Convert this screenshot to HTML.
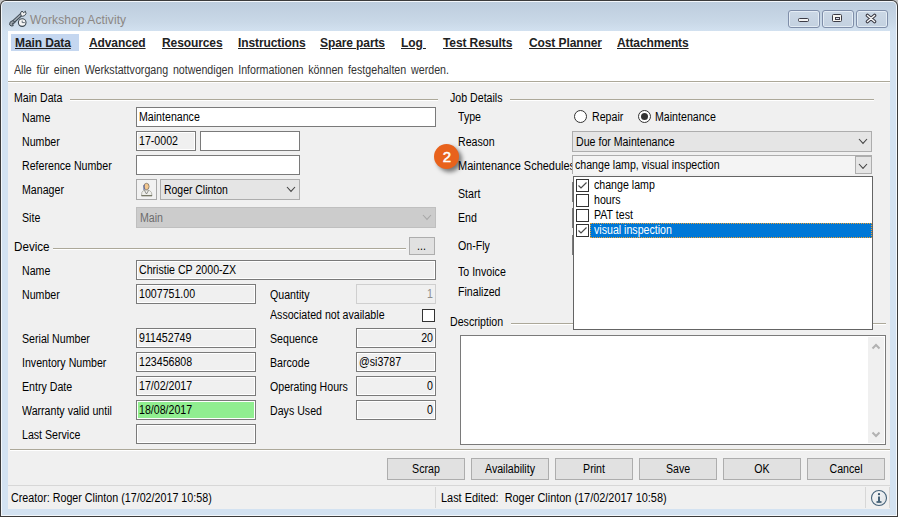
<!DOCTYPE html>
<html><head><meta charset="utf-8"><style>
html,body{margin:0;padding:0;width:898px;height:517px;overflow:hidden;background:#c4c4c4;}
body>div,body>svg{position:absolute;}
div{position:absolute;box-sizing:content-box;}
.t{font-family:"Liberation Sans",sans-serif;white-space:nowrap;}
</style></head><body>
<div style="left:0;top:0;width:898px;height:517px;background:#3b3b3b;border-radius:6px 6px 0 0"></div>
<div style="left:1px;top:1px;width:896px;height:515px;background:#f3f7fb;border-radius:5px 5px 0 0"></div>
<div style="left:2px;top:2px;width:894px;height:513px;background:linear-gradient(#bdcddd 0px,#c9d8e7 20px,#d2e1f0 29px,#d3e2f1 40px);border-radius:4px 4px 0 0"></div>
<div style="left:8px;top:31px;width:882px;height:478px;background:#f0f0f0"></div>
<div style="left:8px;top:31px;width:882px;height:50px;background:#fff"></div>
<div style="left:8px;top:81px;width:882px;height:1px;background:#aca899"></div>
<div style="left:8px;top:82px;width:882px;height:1px;background:#fff"></div>
<div class="t" style="left:30px;top:13px;font-size:12px;line-height:14px;letter-spacing:0.1px;color:#8c8784;">Workshop Activity</div>
<div style="left:788px;top:10px;width:30px;height:16px;border:1px solid #7f8ea9;border-radius:3px;background:linear-gradient(#cbd8e6,#c3d1e0);box-shadow:inset 0 0 0 1px rgba(240,246,252,0.7)"></div>
<div style="left:822px;top:10px;width:30px;height:16px;border:1px solid #7f8ea9;border-radius:3px;background:linear-gradient(#cbd8e6,#c3d1e0);box-shadow:inset 0 0 0 1px rgba(240,246,252,0.7)"></div>
<div style="left:856px;top:10px;width:30px;height:16px;border:1px solid #7f8ea9;border-radius:3px;background:linear-gradient(#cbd8e6,#c3d1e0);box-shadow:inset 0 0 0 1px rgba(240,246,252,0.7)"></div>
<div style="left:798px;top:18px;width:9px;height:2px;border:1.2px solid #3c3c46;background:#f4f4f4;border-radius:1.5px"></div>
<div style="left:832px;top:14px;width:8px;height:6px;border:1.3px solid #3c3c46;background:#f7f5f0;border-radius:1.5px"></div>
<div style="left:835px;top:17px;width:3px;height:1px;border:1px solid #3c3c46;background:#dde"></div>
<svg style="position:absolute;left:864px;top:12px" width="14" height="12"><path d="M3.5,3.5 L10.5,9.5 M10.5,3.5 L3.5,9.5" stroke="#3c3c46" stroke-width="3.6" stroke-linecap="round"/><path d="M3.5,3.5 L10.5,9.5 M10.5,3.5 L3.5,9.5" stroke="#fafafa" stroke-width="1.5" stroke-linecap="round"/></svg>
<svg style="position:absolute;left:6px;top:8px" width="24" height="22" viewBox="6 8 24 22">
<path d="M11.8,23.2 L22.4,13.4" stroke="#3e4a54" stroke-width="3.4" stroke-linecap="round"/>
<path d="M12.2,22.8 L22,13.8" stroke="#aab2ba" stroke-width="1.3"/>
<path d="M21,15.8 Q19.6,12.6 22,11 L23.6,12.8 L25.4,11.2 Q27,13.8 24.6,15.6 Q22.6,16.8 21,15.8 Z" fill="#f4f4f4" stroke="#3e4a54" stroke-width="1"/>
<path d="M9.6,24.8 Q9.2,21.6 12.2,20.8 Q14.6,20.6 15,22.6 L12.6,23.4 L13.2,25.8 Q10.8,26.6 9.6,24.8 Z" fill="#9aa2aa" stroke="#3e4a54" stroke-width="1"/>
<circle cx="22.2" cy="22.6" r="3.8" fill="#f4f4f4" stroke="#3e4a54" stroke-width="1.1"/>
<path d="M22.2,20.6 L22.2,22.6 L24.8,22.6" stroke="#56616a" stroke-width="0.9" fill="none"/>
</svg>
<div style="left:11px;top:34px;width:68px;height:17px;background:#c5d7f0"></div>
<div class="t" style="left:15px;top:36px;font-size:12px;line-height:14px;letter-spacing:-0.1px;color:#222;font-weight:bold;text-decoration:underline;">Main Data</div>
<div class="t" style="left:89px;top:36px;font-size:12px;line-height:14px;letter-spacing:-0.1px;color:#222;font-weight:bold;text-decoration:underline;">Advanced</div>
<div class="t" style="left:162px;top:36px;font-size:12px;line-height:14px;letter-spacing:-0.1px;color:#222;font-weight:bold;text-decoration:underline;">Resources</div>
<div class="t" style="left:238px;top:36px;font-size:12px;line-height:14px;letter-spacing:-0.1px;color:#222;font-weight:bold;text-decoration:underline;">Instructions</div>
<div class="t" style="left:320px;top:36px;font-size:12px;line-height:14px;letter-spacing:-0.1px;color:#222;font-weight:bold;text-decoration:underline;">Spare parts</div>
<div class="t" style="left:401px;top:36px;font-size:12px;line-height:14px;letter-spacing:-0.1px;color:#222;font-weight:bold;text-decoration:underline;">Log&nbsp;</div>
<div class="t" style="left:443px;top:36px;font-size:12px;line-height:14px;letter-spacing:-0.1px;color:#222;font-weight:bold;text-decoration:underline;">Test Results</div>
<div class="t" style="left:529px;top:36px;font-size:12px;line-height:14px;letter-spacing:-0.1px;color:#222;font-weight:bold;text-decoration:underline;">Cost Planner</div>
<div class="t" style="left:617px;top:36px;font-size:12px;line-height:14px;letter-spacing:-0.1px;color:#222;font-weight:bold;text-decoration:underline;">Attachments</div>
<div class="t" style="left:14px;top:63px;font-size:12px;line-height:14px;transform:scaleX(0.89);transform-origin:0 0;color:#333;word-spacing:2px;">Alle f&uuml;r einen Werkstattvorgang notwendigen Informationen k&ouml;nnen festgehalten werden.</div>
<div class="t" style="left:14px;top:91px;font-size:12px;line-height:14px;transform:scaleX(0.885);transform-origin:0 0;color:#000;">Main Data</div>
<div style="left:70px;top:99px;width:368px;height:1px;background:#aca899"></div>
<div style="left:70px;top:100px;width:368px;height:1px;background:#fff"></div>
<div class="t" style="left:22px;top:111px;font-size:12px;line-height:14px;transform:scaleX(0.885);transform-origin:0 0;color:#000;">Name</div>
<div class="t" style="left:22px;top:135px;font-size:12px;line-height:14px;transform:scaleX(0.885);transform-origin:0 0;color:#000;">Number</div>
<div class="t" style="left:22px;top:159px;font-size:12px;line-height:14px;transform:scaleX(0.885);transform-origin:0 0;color:#000;">Reference Number</div>
<div class="t" style="left:22px;top:183px;font-size:12px;line-height:14px;transform:scaleX(0.885);transform-origin:0 0;color:#000;">Manager</div>
<div class="t" style="left:22px;top:211px;font-size:12px;line-height:14px;transform:scaleX(0.885);transform-origin:0 0;color:#000;">Site</div>
<div style="left:136px;top:107px;width:300px;height:20px;background:#7a7a7a"></div>
<div style="left:137px;top:108px;width:298px;height:18px;background:#fff"></div>
<div class="t" style="left:139px;top:110px;font-size:12px;line-height:14px;transform:scaleX(0.885);transform-origin:0 0;color:#000;">Maintenance</div>
<div style="left:136px;top:131px;width:60px;height:20px;background:#7a7a7a"></div>
<div style="left:137px;top:132px;width:58px;height:18px;background:#fff"></div>
<div style="left:138px;top:133px;width:56px;height:16px;background:#f0f0f0"></div>
<div class="t" style="left:139px;top:134px;font-size:12px;line-height:14px;transform:scaleX(0.885);transform-origin:0 0;color:#000;">17-0002</div>
<div style="left:200px;top:131px;width:100px;height:20px;background:#7a7a7a"></div>
<div style="left:201px;top:132px;width:98px;height:18px;background:#fff"></div>
<div style="left:136px;top:155px;width:164px;height:20px;background:#7a7a7a"></div>
<div style="left:137px;top:156px;width:162px;height:18px;background:#fff"></div>
<div style="left:136px;top:179px;width:21px;height:21px;background:#a9a9a9"></div>
<div style="left:137px;top:180px;width:19px;height:19px;background:#f2f2f2"></div>
<svg style="position:absolute;left:137px;top:180px" width="20" height="19" viewBox="137 180 20 19">
<path d="M141.5,196 L141.8,192.5 Q142.5,190 146.5,190 Q150.5,190 151.5,192.5 L152,196 Z" fill="#efefeb" stroke="#a8a8a0" stroke-width="0.8"/>
<path d="M144.5,190.5 L146.5,194 L148.5,190.5" fill="none" stroke="#7a7a74" stroke-width="0.8"/>
<path d="M141.5,195.6 L152,195.6" stroke="#6f705c" stroke-width="1"/>
<ellipse cx="146.5" cy="186.5" rx="2.6" ry="3.2" fill="#f4c890" stroke="#6a6660" stroke-width="0.7"/>
<path d="M144,185 L144,190" stroke="#4a5a9a" stroke-width="1"/>
</svg>
<div style="left:160px;top:179px;width:140px;height:21px;background:#adadad"></div>
<div style="left:161px;top:180px;width:138px;height:19px;background:#e5e5e5"></div>
<svg style="position:absolute;left:285.8px;top:186.3px" width="10" height="6.4"><polyline points="1,1 5.0,5.4 9,1" fill="none" stroke="#444" stroke-width="1.1"/></svg>
<div class="t" style="left:164px;top:183px;font-size:12px;line-height:14px;transform:scaleX(0.87);transform-origin:0 0;color:#000;">Roger Clinton</div>
<div style="left:136px;top:207px;width:300px;height:21px;background:#bfbfbf"></div>
<div style="left:137px;top:208px;width:298px;height:19px;background:#cccccc"></div>
<svg style="position:absolute;left:421.8px;top:214.3px" width="10" height="6.4"><polyline points="1,1 5.0,5.4 9,1" fill="none" stroke="#a8a8a8" stroke-width="1.1"/></svg>
<div class="t" style="left:140px;top:211px;font-size:12px;line-height:14px;transform:scaleX(0.885);transform-origin:0 0;color:#6d6d6d;">Main</div>
<div class="t" style="left:14px;top:240px;font-size:12px;line-height:14px;transform:scaleX(0.97);transform-origin:0 0;color:#000;">Device</div>
<div style="left:53px;top:248px;width:353px;height:1px;background:#aca899"></div>
<div style="left:53px;top:249px;width:353px;height:1px;background:#fff"></div>
<div style="left:409px;top:237px;width:26px;height:18px;background:#adadad"></div>
<div style="left:410px;top:238px;width:24px;height:16px;background:#e1e1e1"></div>
<div class="t" style="left:417px;top:239px;font-size:12px;line-height:14px;transform:scaleX(0.885);transform-origin:0 0;color:#000;">...</div>
<div class="t" style="left:22px;top:264px;font-size:12px;line-height:14px;transform:scaleX(0.885);transform-origin:0 0;color:#000;">Name</div>
<div class="t" style="left:22px;top:288px;font-size:12px;line-height:14px;transform:scaleX(0.885);transform-origin:0 0;color:#000;">Number</div>
<div class="t" style="left:22px;top:332px;font-size:12px;line-height:14px;transform:scaleX(0.885);transform-origin:0 0;color:#000;">Serial Number</div>
<div class="t" style="left:22px;top:356px;font-size:12px;line-height:14px;transform:scaleX(0.885);transform-origin:0 0;color:#000;">Inventory Number</div>
<div class="t" style="left:22px;top:380px;font-size:12px;line-height:14px;transform:scaleX(0.885);transform-origin:0 0;color:#000;">Entry Date</div>
<div class="t" style="left:22px;top:404px;font-size:12px;line-height:14px;transform:scaleX(0.885);transform-origin:0 0;color:#000;">Warranty valid until</div>
<div class="t" style="left:22px;top:428px;font-size:12px;line-height:14px;transform:scaleX(0.885);transform-origin:0 0;color:#000;">Last Service</div>
<div style="left:136px;top:260px;width:300px;height:20px;background:#7a7a7a"></div>
<div style="left:137px;top:261px;width:298px;height:18px;background:#fff"></div>
<div style="left:138px;top:262px;width:296px;height:16px;background:#f0f0f0"></div>
<div class="t" style="left:139px;top:263px;font-size:12px;line-height:14px;transform:scaleX(0.885);transform-origin:0 0;color:#000;">Christie CP 2000-ZX</div>
<div style="left:136px;top:284px;width:120px;height:20px;background:#7a7a7a"></div>
<div style="left:137px;top:285px;width:118px;height:18px;background:#fff"></div>
<div style="left:138px;top:286px;width:116px;height:16px;background:#f0f0f0"></div>
<div class="t" style="left:139px;top:287px;font-size:12px;line-height:14px;transform:scaleX(0.885);transform-origin:0 0;color:#000;">1007751.00</div>
<div style="left:136px;top:328px;width:120px;height:20px;background:#7a7a7a"></div>
<div style="left:137px;top:329px;width:118px;height:18px;background:#fff"></div>
<div style="left:138px;top:330px;width:116px;height:16px;background:#f0f0f0"></div>
<div class="t" style="left:139px;top:331px;font-size:12px;line-height:14px;transform:scaleX(0.885);transform-origin:0 0;color:#000;">911452749</div>
<div style="left:136px;top:352px;width:120px;height:20px;background:#7a7a7a"></div>
<div style="left:137px;top:353px;width:118px;height:18px;background:#fff"></div>
<div style="left:138px;top:354px;width:116px;height:16px;background:#f0f0f0"></div>
<div class="t" style="left:139px;top:355px;font-size:12px;line-height:14px;transform:scaleX(0.885);transform-origin:0 0;color:#000;">123456808</div>
<div style="left:136px;top:376px;width:120px;height:20px;background:#7a7a7a"></div>
<div style="left:137px;top:377px;width:118px;height:18px;background:#fff"></div>
<div style="left:138px;top:378px;width:116px;height:16px;background:#f0f0f0"></div>
<div class="t" style="left:139px;top:379px;font-size:12px;line-height:14px;transform:scaleX(0.885);transform-origin:0 0;color:#000;">17/02/2017</div>
<div style="left:136px;top:400px;width:120px;height:20px;background:#7a7a7a"></div>
<div style="left:137px;top:401px;width:118px;height:18px;background:#fff"></div>
<div style="left:138px;top:402px;width:116px;height:16px;background:#90ee90"></div>
<div class="t" style="left:139px;top:403px;font-size:12px;line-height:14px;transform:scaleX(0.885);transform-origin:0 0;color:#000;">18/08/2017</div>
<div style="left:136px;top:424px;width:120px;height:20px;background:#7a7a7a"></div>
<div style="left:137px;top:425px;width:118px;height:18px;background:#fff"></div>
<div style="left:138px;top:426px;width:116px;height:16px;background:#f0f0f0"></div>
<div class="t" style="left:270px;top:288px;font-size:12px;line-height:14px;transform:scaleX(0.885);transform-origin:0 0;color:#000;">Quantity</div>
<div class="t" style="left:270px;top:308px;font-size:12px;line-height:14px;transform:scaleX(0.885);transform-origin:0 0;color:#000;">Associated not available</div>
<div class="t" style="left:270px;top:332px;font-size:12px;line-height:14px;transform:scaleX(0.885);transform-origin:0 0;color:#000;">Sequence</div>
<div class="t" style="left:270px;top:356px;font-size:12px;line-height:14px;transform:scaleX(0.885);transform-origin:0 0;color:#000;">Barcode</div>
<div class="t" style="left:270px;top:380px;font-size:12px;line-height:14px;transform:scaleX(0.885);transform-origin:0 0;color:#000;">Operating Hours</div>
<div class="t" style="left:270px;top:404px;font-size:12px;line-height:14px;transform:scaleX(0.885);transform-origin:0 0;color:#000;">Days Used</div>
<div style="left:356px;top:284px;width:80px;height:20px;background:#cfcfcf"></div>
<div style="left:357px;top:285px;width:78px;height:18px;background:#f0f0f0"></div>
<div class="t" style="left:233px;width:200px;text-align:right;top:287px;font-size:12px;line-height:14px;transform:scaleX(0.885);transform-origin:100% 0;color:#8d8d8d">1</div>
<div style="left:422px;top:309px;width:13px;height:13px;background:#333"></div>
<div style="left:423px;top:310px;width:11px;height:11px;background:#fff"></div>
<div style="left:356px;top:328px;width:80px;height:20px;background:#7a7a7a"></div>
<div style="left:357px;top:329px;width:78px;height:18px;background:#fff"></div>
<div style="left:358px;top:330px;width:76px;height:16px;background:#f0f0f0"></div>
<div class="t" style="left:233px;width:200px;text-align:right;top:331px;font-size:12px;line-height:14px;transform:scaleX(0.885);transform-origin:100% 0;color:#000">20</div>
<div style="left:356px;top:352px;width:80px;height:20px;background:#7a7a7a"></div>
<div style="left:357px;top:353px;width:78px;height:18px;background:#fff"></div>
<div style="left:358px;top:354px;width:76px;height:16px;background:#f0f0f0"></div>
<div style="left:356px;top:376px;width:80px;height:20px;background:#7a7a7a"></div>
<div style="left:357px;top:377px;width:78px;height:18px;background:#fff"></div>
<div style="left:358px;top:378px;width:76px;height:16px;background:#f0f0f0"></div>
<div class="t" style="left:233px;width:200px;text-align:right;top:379px;font-size:12px;line-height:14px;transform:scaleX(0.885);transform-origin:100% 0;color:#000">0</div>
<div style="left:356px;top:400px;width:80px;height:20px;background:#7a7a7a"></div>
<div style="left:357px;top:401px;width:78px;height:18px;background:#fff"></div>
<div style="left:358px;top:402px;width:76px;height:16px;background:#f0f0f0"></div>
<div class="t" style="left:233px;width:200px;text-align:right;top:403px;font-size:12px;line-height:14px;transform:scaleX(0.885);transform-origin:100% 0;color:#000">0</div>
<div class="t" style="left:359px;top:355px;font-size:12px;line-height:14px;transform:scaleX(0.885);transform-origin:0 0;color:#000;">@si3787</div>
<div class="t" style="left:450px;top:315px;font-size:12px;line-height:14px;transform:scaleX(0.885);transform-origin:0 0;color:#000;">Description</div>
<div style="left:511px;top:323px;width:375px;height:1px;background:#aca899"></div>
<div style="left:511px;top:324px;width:375px;height:1px;background:#fff"></div>
<div style="left:460px;top:335px;width:426px;height:110px;background:#7a7a7a"></div>
<div style="left:461px;top:336px;width:424px;height:108px;background:#fff"></div>
<div style="left:868px;top:337px;width:16px;height:106px;background:#f0f0f0"></div>
<svg style="position:absolute;left:870px;top:341px" width="12" height="10"><polyline points="2.5,7.5 6,4 9.5,7.5" fill="none" stroke="#b2b2b2" stroke-width="2"/></svg>
<svg style="position:absolute;left:870px;top:430px" width="12" height="10"><polyline points="2.5,2.5 6,6 9.5,2.5" fill="none" stroke="#b2b2b2" stroke-width="2"/></svg>
<div class="t" style="left:450px;top:91px;font-size:12px;line-height:14px;transform:scaleX(0.885);transform-origin:0 0;color:#000;">Job Details</div>
<div style="left:510px;top:99px;width:364px;height:1px;background:#aca899"></div>
<div style="left:510px;top:100px;width:364px;height:1px;background:#fff"></div>
<div class="t" style="left:458px;top:110px;font-size:12px;line-height:14px;transform:scaleX(0.885);transform-origin:0 0;color:#000;">Type</div>
<div class="t" style="left:458px;top:135px;font-size:12px;line-height:14px;transform:scaleX(0.885);transform-origin:0 0;color:#000;">Reason</div>
<div class="t" style="left:458px;top:159px;font-size:12px;line-height:14px;transform:scaleX(0.914);transform-origin:0 0;color:#000;">Maintenance Schedules</div>
<div class="t" style="left:458px;top:187px;font-size:12px;line-height:14px;transform:scaleX(0.885);transform-origin:0 0;color:#000;">Start</div>
<div class="t" style="left:458px;top:211px;font-size:12px;line-height:14px;transform:scaleX(0.885);transform-origin:0 0;color:#000;">End</div>
<div class="t" style="left:458px;top:239px;font-size:12px;line-height:14px;transform:scaleX(0.885);transform-origin:0 0;color:#000;">On-Fly</div>
<div class="t" style="left:458px;top:265px;font-size:12px;line-height:14px;transform:scaleX(0.885);transform-origin:0 0;color:#000;">To Invoice</div>
<div class="t" style="left:458px;top:285px;font-size:12px;line-height:14px;transform:scaleX(0.885);transform-origin:0 0;color:#000;">Finalized</div>
<svg style="position:absolute;left:573px;top:109px" width="15" height="15"><circle cx="7.5" cy="7.5" r="6" fill="#fff" stroke="#333" stroke-width="1"/></svg>
<div class="t" style="left:592px;top:110px;font-size:12px;line-height:14px;transform:scaleX(0.885);transform-origin:0 0;color:#000;">Repair</div>
<svg style="position:absolute;left:637px;top:109px" width="15" height="15"><circle cx="7.5" cy="7.5" r="6" fill="#fff" stroke="#333" stroke-width="1"/><circle cx="7.5" cy="7.5" r="3.5" fill="#333"/></svg>
<div class="t" style="left:655px;top:110px;font-size:12px;line-height:14px;transform:scaleX(0.885);transform-origin:0 0;color:#000;">Maintenance</div>
<div style="left:572px;top:131px;width:300px;height:21px;background:#adadad"></div>
<div style="left:573px;top:132px;width:298px;height:19px;background:#e5e5e5"></div>
<svg style="position:absolute;left:857.8px;top:138.3px" width="10" height="6.4"><polyline points="1,1 5.0,5.4 9,1" fill="none" stroke="#444" stroke-width="1.1"/></svg>
<div class="t" style="left:576px;top:135px;font-size:12px;line-height:14px;transform:scaleX(0.885);transform-origin:0 0;color:#000;">Due for Maintenance</div>
<div style="left:572px;top:155px;width:300px;height:19px;background:#adadad"></div>
<div style="left:573px;top:156px;width:298px;height:18px;background:#f4f4f4"></div>
<div style="left:855px;top:156px;width:17px;height:18px;background:#adadad"></div>
<div style="left:856px;top:157px;width:15px;height:16px;background:#e5e5e5"></div>
<svg style="position:absolute;left:858.2px;top:162.60000000000002px" width="10" height="6.4"><polyline points="1,1 5.0,5.4 9,1" fill="none" stroke="#444" stroke-width="1.1"/></svg>
<div class="t" style="left:575px;top:158px;font-size:12px;line-height:14px;transform:scaleX(0.885);transform-origin:0 0;color:#000;">change lamp, visual inspection</div>
<div style="left:572px;top:182px;width:1px;height:20px;background:#7a7a7a"></div>
<div style="left:572px;top:208px;width:1px;height:20px;background:#7a7a7a"></div>
<div style="left:572px;top:235px;width:1px;height:20px;background:#7a7a7a"></div>
<div style="left:573px;top:176px;width:300px;height:154px;background:#646464"></div>
<div style="left:574px;top:177px;width:298px;height:152px;background:#fff"></div>
<div class="t" style="left:594px;top:178px;font-size:12px;line-height:14px;transform:scaleX(0.885);transform-origin:0 0;color:#000;">change lamp</div>
<div style="left:576px;top:179px;width:13px;height:13px;background:#333"></div>
<div style="left:577px;top:180px;width:11px;height:11px;background:#fff"></div>
<svg style="position:absolute;left:576px;top:179px" width="13" height="13"><polyline points="2.5,6.5 5,9 10.5,3.5" fill="none" stroke="#4a4a4a" stroke-width="1.2"/></svg>
<div class="t" style="left:594px;top:193px;font-size:12px;line-height:14px;transform:scaleX(0.885);transform-origin:0 0;color:#000;">hours</div>
<div style="left:576px;top:194px;width:13px;height:13px;background:#333"></div>
<div style="left:577px;top:195px;width:11px;height:11px;background:#fff"></div>
<div class="t" style="left:594px;top:208px;font-size:12px;line-height:14px;transform:scaleX(0.885);transform-origin:0 0;color:#000;">PAT test</div>
<div style="left:576px;top:209px;width:13px;height:13px;background:#333"></div>
<div style="left:577px;top:210px;width:11px;height:11px;background:#fff"></div>
<div style="left:590px;top:223px;width:282px;height:15px;background:#0078d7"></div>
<div style="left:590px;top:223px;width:280px;height:13px;border:1px dotted #f0a030"></div>
<div class="t" style="left:594px;top:223px;font-size:12px;line-height:14px;transform:scaleX(0.885);transform-origin:0 0;color:#fff;">visual inspection</div>
<div style="left:576px;top:224px;width:13px;height:13px;background:#333"></div>
<div style="left:577px;top:225px;width:11px;height:11px;background:#fff"></div>
<svg style="position:absolute;left:576px;top:224px" width="13" height="13"><polyline points="2.5,6.5 5,9 10.5,3.5" fill="none" stroke="#4a4a4a" stroke-width="1.2"/></svg>
<div style="left:10px;top:449px;width:880px;height:1px;background:#aca899"></div>
<div style="left:10px;top:450px;width:880px;height:1px;background:#fff"></div>
<div style="left:387px;top:458px;width:78px;height:22px;background:#adadad"></div>
<div style="left:388px;top:459px;width:76px;height:20px;background:#e1e1e1"></div>
<div class="t" style="left:387px;width:78px;text-align:center;top:462px;font-size:12px;line-height:14px;transform:scaleX(0.885);transform-origin:50% 0;color:#000">Scrap</div>
<div style="left:471px;top:458px;width:78px;height:22px;background:#adadad"></div>
<div style="left:472px;top:459px;width:76px;height:20px;background:#e1e1e1"></div>
<div class="t" style="left:471px;width:78px;text-align:center;top:462px;font-size:12px;line-height:14px;transform:scaleX(0.885);transform-origin:50% 0;color:#000">Availability</div>
<div style="left:555px;top:458px;width:78px;height:22px;background:#adadad"></div>
<div style="left:556px;top:459px;width:76px;height:20px;background:#e1e1e1"></div>
<div class="t" style="left:555px;width:78px;text-align:center;top:462px;font-size:12px;line-height:14px;transform:scaleX(0.885);transform-origin:50% 0;color:#000">Print</div>
<div style="left:639px;top:458px;width:78px;height:22px;background:#adadad"></div>
<div style="left:640px;top:459px;width:76px;height:20px;background:#e1e1e1"></div>
<div class="t" style="left:639px;width:78px;text-align:center;top:462px;font-size:12px;line-height:14px;transform:scaleX(0.885);transform-origin:50% 0;color:#000">Save</div>
<div style="left:723px;top:458px;width:78px;height:22px;background:#adadad"></div>
<div style="left:724px;top:459px;width:76px;height:20px;background:#e1e1e1"></div>
<div class="t" style="left:723px;width:78px;text-align:center;top:462px;font-size:12px;line-height:14px;transform:scaleX(0.885);transform-origin:50% 0;color:#000">OK</div>
<div style="left:807px;top:458px;width:78px;height:22px;background:#adadad"></div>
<div style="left:808px;top:459px;width:76px;height:20px;background:#e1e1e1"></div>
<div class="t" style="left:807px;width:78px;text-align:center;top:462px;font-size:12px;line-height:14px;transform:scaleX(0.885);transform-origin:50% 0;color:#000">Cancel</div>
<div style="left:8px;top:485px;width:882px;height:1px;background:#d7d7d7"></div>
<div style="left:435px;top:487px;width:1px;height:21px;background:#d7d7d7"></div>
<div style="left:865px;top:487px;width:1px;height:21px;background:#d7d7d7"></div>
<div style="left:889px;top:487px;width:1px;height:21px;background:#d7d7d7"></div>
<div class="t" style="left:11px;top:491px;font-size:12px;line-height:14px;transform:scaleX(0.893);transform-origin:0 0;color:#000;">Creator: Roger Clinton (17/02/2017 10:58)</div>
<div class="t" style="left:441px;top:491px;font-size:12px;line-height:14px;transform:scaleX(0.909);transform-origin:0 0;color:#000;">Last Edited:&nbsp; Roger Clinton (17/02/2017 10:58)</div>
<svg style="position:absolute;left:870px;top:489px" width="18" height="18" viewBox="0 0 18 18">
<defs><linearGradient id="ig" x1="0" y1="0" x2="1" y2="1"><stop offset="0" stop-color="#f8f8f8"/><stop offset="1" stop-color="#dde2e6"/></linearGradient></defs>
<circle cx="9" cy="9" r="7.5" fill="url(#ig)" stroke="#46637a" stroke-width="1.1"/>
<circle cx="9" cy="5.2" r="1.1" fill="#34536a"/>
<path d="M9,7.5 L9,12.5" stroke="#34536a" stroke-width="1.8"/>
<path d="M6.5,13 L11.5,13" stroke="#34536a" stroke-width="1.6"/>
</svg>
<div style="left:434px;top:144px;width:25px;height:25px;border-radius:50%;background:#e8621c;box-shadow:3px 3px 4px rgba(0,0,0,0.5)"></div>
<div class="t" style="left:434.5px;top:148.6px;width:25px;text-align:center;font-size:15px;line-height:16px;color:#fff;-webkit-text-stroke:0.5px #fff">2</div>
</body></html>
